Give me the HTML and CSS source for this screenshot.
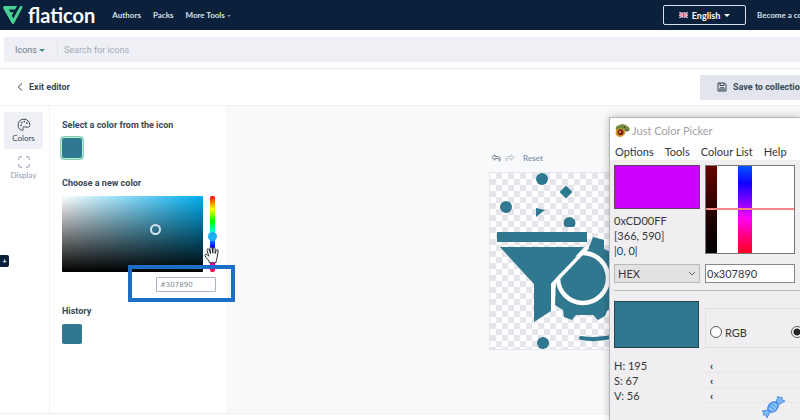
FILE: index.html
```
<!DOCTYPE html>
<html lang="en">

<head>
    <meta charset="utf-8">
    <meta name="viewport" content="width=device-width, initial-scale=1.0">
    <title>Flaticon editor</title>
    <link rel="stylesheet" href="styles.css">
</head>

<body>
    <header class="topbar">
        <a href="#" class="logo">
            <svg class="logo-mark" viewBox="0 0 20 19" aria-hidden="true">
                <path d="M1.500 0H14L12 3.500H5.800L7.300 6.300H10.500L8.800 9.500L10.300 12.500L16.500 1.200Q17.200 0 18.300 0Q20 .3 19.200 2L11.300 17Q10 19 8.700 17L.3 2.400Q-.4.6 1.500 0Z" fill="#4ad295" />
            </svg>
            <span class="logo-text">flaticon</span>
        </a>
        <nav class="nav">
            <a href="#">Authors</a>
            <a href="#">Packs</a>
            <a href="#">More Tools <span class="caret caret-small"></span></a>
        </nav>
        <button type="button" class="language">
            <svg class="flag" viewBox="0 0 10 7" aria-hidden="true">
                <path d="M0 0H10V7H0Z" fill="#39477f" />
                <path d="M0 0L10 7M10 0L0 7" stroke="#e6dce6" stroke-width="1.200" />
                <path d="M5 0V7M0 3.500H10" stroke="#fff" stroke-width="2.400" />
                <path d="M5 0V7M0 3.500H10" stroke="#dc4262" stroke-width="1.400" />
            </svg>
            English
            <span class="caret"></span>
        </button>
        <a href="#" class="contributor">Become a contributor</a>
    </header>

    <div class="search">
        <div class="search-box">
            <button type="button" class="search-type">Icons <span class="caret caret-green"></span></button>
            <input type="search" class="search-input" placeholder="Search for icons" aria-label="Search for icons">
        </div>
    </div>

    <div class="toolbar">
        <a href="#" class="exit">
            <svg class="exit-icon" viewBox="0 0 6 8" aria-hidden="true">
                <path d="M5 .5L1.200 4L5 7.500" />
            </svg>
            Exit editor
        </a>
        <button type="button" class="save">
            <svg class="save-icon" viewBox="0 0 10 10" aria-hidden="true">
                <path d="M1 1H7.500L9 2.500V9H1ZM3 1V3.500H7V1M3 9V5.800H7V9M4 7.300H6" />
            </svg>
            Save to collection
        </button>
    </div>

    <main class="editor">
        <div class="tabs">
            <button type="button" class="tab active">
                <svg class="tab-icon" viewBox="0 0 14 14" aria-hidden="true">
                    <path d="M7 1.200A5.800 5.800 0 0 0 4.600 12.300C6 12.900 6.400 12 6 11C5.400 9.500 6.200 8.600 7.600 8.800L10.500 9.300C12.300 9.400 12.900 8.100 12.800 6.600A5.700 5.700 0 0 0 7 1.200Z" />
                    <circle cx="4" cy="7.300" r=".5" />
                    <circle cx="4.800" cy="4.700" r=".5" />
                    <circle cx="7.300" cy="3.600" r=".5" />
                    <circle cx="9.900" cy="5" r=".5" />
                </svg>
                Colors
            </button>
            <button type="button" class="tab">
                <svg class="tab-icon" viewBox="0 0 14 14" aria-hidden="true">
                    <path d="M1.800 5V2.800Q1.800 1.800 2.800 1.800H5M9 1.800H11.200Q12.200 1.800 12.200 2.800V5M12.200 9V11.200Q12.200 12.200 11.200 12.200H9M5 12.200H2.800Q1.800 12.200 1.800 11.200V9" />
                </svg>
                Display
            </button>
            <button type="button" class="expand" aria-label="Expand">+</button>
        </div>

        <section class="panel">
            <h2 class="panel-title">Select a color from the icon</h2>
            <button type="button" class="swatch selected" aria-label="Icon color"></button>

            <h2 class="panel-title">Choose a new color</h2>
            <div class="mixer">
                <div class="shade">
                    <span class="shade-handle"></span>
                </div>
                <input type="range" class="hue" min="0" max="360" value="191" aria-label="Hue">
                <svg class="hand" viewBox="0 0 17 18" aria-hidden="true">
                    <path d="M5.500 16.800C5 14 2.500 12.500 1 9.800C.4 8.400 2 7.600 3.200 8.700L4.800 10.300L3 4.300C2.700 2.800 4.500 2.200 5.100 3.700L6.500 7.500L5.800 2.200C5.800.8 7.700.7 8 2.100L8.800 7.200L9.100 2.300C9.300 1 11 1.200 11.100 2.500L11.200 7.500L12.400 4.200C12.900 3.100 14.400 3.500 14.200 4.800L13.300 10C13.200 12.500 12.200 13.500 12 16.800Z" />
                </svg>
            </div>
            <div class="hex-row">
                <div class="highlight">
                    <input type="text" class="hex" value="#307890" aria-label="Hex color">
                </div>
            </div>

            <h2 class="panel-title">History</h2>
            <button type="button" class="swatch" aria-label="Previous color"></button>
        </section>

        <section class="canvas">
            <div class="history">
                <button type="button" class="history-btn" aria-label="Undo">
                    <svg viewBox="0 0 10 8" aria-hidden="true">
                        <path d="M4 .8L.8 3.500L4 6.200V4.500H7Q8.300 4.700 8.500 7.200Q10.500 3 7 2.500H4Z" />
                    </svg>
                </button>
                <button type="button" class="history-btn muted" aria-label="Redo">
                    <svg viewBox="0 0 10 8" aria-hidden="true">
                        <path d="M6 .8L9.200 3.500L6 6.200V4.500H3Q1.700 4.700 1.500 7.200Q-.5 3 3 2.500H6Z" />
                    </svg>
                </button>
                <button type="button" class="reset">Reset</button>
            </div>
            <div class="artboard">
                <svg class="artwork" viewBox="1 1 176 176" aria-hidden="true">
                    <g fill="#307890">
                        <circle cx="53" cy="7" r="6" />
                        <circle cx="17" cy="35" r="6" />
                        <path d="M77 13.500L83.500 20L77 26.500L70.500 20Z" />
                        <path d="M47 36L56 38L47 45Z" />
                        <path d="M76 55A6 6 0 1 1 85 55Z" />
                        <path d="M8 60H98V70H8Z" />
                        <circle cx="54" cy="171" r="6" />
                        <path d="M97 80L101 73L104 65L115 68V77Q121 79 124 82L134 80L140 90L135 98V116L141 125L134 135L124 134L118 139L116 144L109 148L104 143H87L83 148L75 145L74 138L66 133L67 110Z" />
                    </g>
                    <circle cx="94" cy="106" r="25" fill="#307890" stroke="#fff" stroke-width="4.500" />
                    <path d="M11 75H95L62 112V139L45 150V112Z" fill="#307890" />
                    <path d="M99 75L64 112V137" fill="none" stroke="#fff" stroke-width="3.500" />
                    <path d="M92 166Q108 169 126 164" fill="none" stroke="#307890" stroke-width="4" stroke-linecap="round" />
                </svg>
            </div>
        </section>
    </main>

    <section class="picker">
        <div class="picker-title">
            <svg class="chameleon" viewBox="0 0 15 14" aria-hidden="true">
                <path d="M1 6Q0 2 4 1.500Q8-1 12 2Q15 3.500 14.500 6L11 6.800Q10 12.500 5 13Q1 13 .5 9Z" fill="#d39a35" />
                <path d="M1 6Q0 2 4 1.500Q8-1 12 2Q15 3.500 14.500 6L10 6.200Q6 2.500 1 6Z" fill="#718b45" />
                <path d="M10 6L14.500 6.200L12 7.500Z" fill="#29302a" />
                <circle cx="5.500" cy="8.300" r="3" fill="#7b1f16" />
                <circle cx="5" cy="8" r="1" fill="#e8b45a" />
                <circle cx="9.500" cy="3.300" r=".7" fill="#26351f" />
            </svg>
            Just Color Picker
        </div>
        <div class="picker-menu">
            <button type="button">Options</button>
            <button type="button">Tools</button>
            <button type="button">Colour List</button>
            <button type="button">Help</button>
        </div>
        <div class="picker-body">
            <div class="sample">
                <div class="sample-color"></div>
                <p>0xCD00FF</p>
                <p>[366, 590]</p>
                <p>|0, 0|</p>
            </div>
            <div class="spectrum">
                <div class="spectrum-dark"></div>
                <div class="spectrum-hue"></div>
                <div class="spectrum-line"></div>
            </div>
            <div class="format">
                <select class="format-select" aria-label="Color format">
                    <option>HEX</option>
                </select>
                <svg class="format-arrow" viewBox="0 0 8 5" aria-hidden="true">
                    <path d="M1 1L4 4L7 1" />
                </svg>
            </div>
            <input type="text" class="format-value" value="0x307890" aria-label="Color value">
        </div>
        <div class="picker-body picker-edit">
            <div class="current-color"></div>
            <div class="modes">
                <label class="mode"><input type="radio" name="mode">RGB</label>
                <input type="radio" name="mode" aria-label="HSV" checked>
            </div>
            <div class="levels">
                <p>H: 195</p>
                <p>S: 67</p>
                <p>V: 56</p>
            </div>
            <div class="sliders">
                <button type="button" aria-label="Less hue">‹</button>
                <button type="button" aria-label="Less saturation">‹</button>
                <button type="button" aria-label="Less value">‹</button>
            </div>
        </div>
        <svg class="candy" viewBox="0 0 24 24" aria-hidden="true">
            <path d="M8 15L1 16L3 18L2 20L5 20L6 23L9 17ZM15 8L17 1L19 3L21 2L21 5L24 6L17 10Z" fill="#7db8f3" stroke="#4d95e3" />
            <ellipse cx="12" cy="12" rx="6" ry="4.500" transform="rotate(-45 12 12)" fill="#62a7ef" stroke="#3d86dc" />
            <path d="M8 13L13 16M10 10L15 14M12 8L16 11" stroke="#c1defc" fill="none" />
        </svg>
    </section>
</body>

</html>
```
FILE: styles.css
```
* {
    margin: 0;
    padding: 0;
    box-sizing: border-box;
}

body {
    font-family: Lato, 'Open Sans', sans-serif;
    font-size: 9px;
    background: #ffffff;
    color: #374957;
    min-height: 100vh;
    display: flex;
    flex-direction: column;
    position: relative;
    overflow: hidden;
    white-space: nowrap;
}

button,
input,
select {
    font: inherit;
    color: inherit;
    border: none;
    background: none;
    outline: none;
}

button {
    cursor: pointer;
}

a {
    color: inherit;
    text-decoration: none;
}

.topbar {
    display: flex;
    align-items: center;
    height: 30px;
    flex-shrink: 0;
    padding-left: 3px;
    background: #0a203b;
    color: #d7e0ea;
    font-size: 8px;
    font-weight: 700;
}

.logo {
    display: flex;
    align-items: center;
    gap: 5px;
    color: #ffffff;
}

.logo-mark {
    width: 20px;
    height: 19px;
}

.logo-text {
    font-size: 20px;
    line-height: 24px;
}

.nav {
    display: flex;
    gap: 12px;
    margin-left: 17px;
}

.caret {
    display: inline-block;
    border: 3px solid transparent;
    border-top-color: currentColor;
    border-bottom: none;
    vertical-align: middle;
}

.caret-small {
    border-width: 2px;
    border-bottom: none;
    opacity: 0.6;
}

.caret-green {
    color: #468b82;
}

.language {
    display: flex;
    align-items: center;
    justify-content: center;
    gap: 4px;
    width: 83px;
    height: 20px;
    margin-left: auto;
    border: 1px solid #d7e0ea;
    border-radius: 2px;
    color: #ffffff;
    font-size: 9px;
}

.flag {
    width: 9px;
    height: 6px;
}

.contributor {
    width: 54px;
    padding-left: 11px;
}

.search {
    padding: 7px 0 6px 4px;
    border-bottom: 1px solid #e7e8ed;
}

.search-box {
    display: flex;
    align-items: center;
    height: 25px;
    background: #eff0f5;
    color: #6e7a88;
    font-family: Roboto, sans-serif;
}

.search-type {
    width: 54px;
    height: 15px;
    padding-left: 11px;
    border-right: 1px solid #dfe2e8;
    text-align: left;
}

.search-input {
    flex: 1;
    padding-left: 6px;
}

.search-input::placeholder {
    color: #a2aab5;
}

.toolbar {
    display: flex;
    align-items: center;
    justify-content: space-between;
    height: 37px;
    flex-shrink: 0;
    padding-left: 17px;
    border-bottom: 1px solid #f0f1f4;
    font-family: Roboto, sans-serif;
    font-weight: 700;
}

.exit {
    display: flex;
    align-items: center;
    gap: 6px;
}

.exit-icon {
    width: 6px;
    height: 8px;
}

.exit-icon path,
.save-icon path,
.tab-icon path,
.tab-icon circle {
    fill: none;
    stroke: currentColor;
}

.save {
    display: flex;
    align-items: center;
    gap: 6px;
    width: 100px;
    height: 25px;
    padding-left: 17px;
    background: #e2e5ed;
}

.save-icon {
    flex-shrink: 0;
    width: 10px;
    height: 10px;
}

.editor {
    display: flex;
    flex: 1;
    margin-bottom: 6px;
    border-bottom: 1px solid #eceef2;
}

.tabs {
    position: relative;
    display: flex;
    flex-direction: column;
    width: 50px;
    padding: 6px 6px 0 4px;
    border-right: 1px solid #f0f1f4;
}

.tab {
    display: flex;
    flex-direction: column;
    align-items: center;
    justify-content: center;
    gap: 1px;
    height: 37px;
    border-radius: 2px;
    color: #8e9bb2;
    font-size: 8px;
}

.tab.active {
    background: #eff0f6;
    color: #374957;
}

.tab-icon {
    width: 14px;
    height: 14px;
}

.expand {
    position: absolute;
    left: 0;
    top: 149px;
    width: 9px;
    height: 12px;
    border-radius: 0 2px 2px 0;
    background: #0a203b;
    color: #ffffff;
    font-size: 8px;
    font-weight: 700;
    line-height: 10px;
}

.panel {
    width: 176px;
    padding: 13px 10px 0 12px;
}

.panel-title {
    font-family: Roboto, sans-serif;
    font-size: 9px;
    font-weight: 700;
    line-height: 12px;
    margin-bottom: 7px;
}

.swatch {
    display: block;
    width: 20px;
    height: 20px;
    margin-bottom: 19px;
    border-radius: 2px;
    background: #307890;
}

.swatch.selected {
    box-shadow: 0 0 0 1px #b4ecd4, 0 0 0 2px #8acdb5;
}

.mixer {
    position: relative;
    display: flex;
    gap: 3px;
}

.shade {
    position: relative;
    flex-shrink: 0;
    width: 141px;
    height: 76px;
    border-radius: 1px;
    background: linear-gradient(to top, #000000, transparent), linear-gradient(to right, #ffffff, #00aeef);
}

.shade-handle {
    position: absolute;
    left: 88px;
    top: 28px;
    width: 11px;
    height: 11px;
    border: 2px solid #d2e3ed;
    border-radius: 50%;
}

.hue {
    appearance: none;
    writing-mode: vertical-lr;
    width: 12px;
    height: 76px;
    margin: 0;
}

.hue::-webkit-slider-runnable-track {
    width: 5px;
    border-radius: 2px;
    background: linear-gradient(#ff0000, #ffff00 17%, #00ff00 33%, #00ffff 50%, #0000ff 67%, #ff00ff 83%, #ff0044);
}

.hue::-webkit-slider-thumb {
    appearance: none;
    width: 9px;
    height: 9px;
    margin-left: -2px;
    border-radius: 50%;
    background: #16b1f3;
}

.hand {
    position: absolute;
    left: 142px;
    top: 50px;
    width: 17px;
    height: 18px;
    z-index: 1;
}

.hand path {
    fill: #ffffff;
    stroke: #242a31;
}

.hex-row {
    position: relative;
    height: 33px;
}

.highlight {
    position: absolute;
    right: -19px;
    top: -7px;
    width: 107px;
    height: 37px;
    padding: 8px 16px 0 24px;
    border: 4px solid #1b70c6;
}

.hex {
    display: block;
    width: 60px;
    height: 15px;
    padding-left: 3px;
    border: 1px solid #a9b4c5;
    border-radius: 1px;
    color: #858c96;
    font-family: 'DejaVu Sans', sans-serif;
    font-size: 7px;
}

.canvas {
    flex: 1;
    min-width: 0;
    padding: 46px 0 0 263px;
    background: #f8f9fb;
}

.history {
    display: flex;
    align-items: center;
    gap: 4px;
    height: 12px;
    margin-bottom: 8px;
    padding-left: 2px;
    color: #8e9bb2;
    font-size: 8px;
    font-weight: 700;
}

.history-btn {
    width: 10px;
    height: 8px;
}

.history-btn svg {
    display: block;
    fill: none;
    stroke: #748191;
}

.history-btn.muted svg {
    stroke: #bcc4ce;
}

.reset {
    margin-left: 4px;
}

.artboard {
    width: 178px;
    height: 178px;
    border: 1px solid #e4e7ec;
    background: repeating-conic-gradient(#e5e6ec 0 25%, #ffffff 0 50%) 0 0 / 12px 12px;
}

.artwork {
    display: block;
}

.picker {
    position: absolute;
    left: 609px;
    right: 0;
    top: 117px;
    bottom: 0;
    overflow: hidden;
    border: 1px solid #b5b7ba;
    border-width: 1px 0 0 1px;
    background: #f0eef0;
    box-shadow: 0 0 8px rgba(0, 0, 0, 0.25);
    color: #35363a;
    font-family: Lato, 'Noto Sans', sans-serif;
    font-size: 11px;
}

.picker-title {
    display: flex;
    align-items: center;
    gap: 2px;
    height: 25px;
    padding-left: 5px;
    background: #ffffff;
    color: #a3a3a5;
}

.chameleon {
    width: 15px;
    height: 14px;
}

.picker-menu {
    display: flex;
    gap: 11px;
    height: 17px;
    padding-left: 5px;
    background: #ffffff;
    line-height: 16px;
}

.picker-body {
    display: grid;
    grid-template-columns: 86px 90px;
    gap: 6px 5px;
    padding: 5px 4px 7px;
}

.sample p {
    line-height: 15px;
}

.sample-color {
    height: 44px;
    margin-bottom: 4px;
    border: 1px solid #65446b;
    background: #cd00ff;
}

.spectrum {
    position: relative;
    display: flex;
    gap: 21px;
    height: 89px;
    border: 1px solid #77777a;
    background: #ffffff;
}

.spectrum-dark {
    width: 11px;
    background: linear-gradient(#690000, #250000 55%, #000000);
}

.spectrum-hue {
    width: 14px;
    background: linear-gradient(#0055ff, #1200ff 20%, #9900ff 45%, #ff00ff 60%, #ff0080 80%, #ff0022);
}

.spectrum-line {
    position: absolute;
    left: 0;
    right: 0;
    top: 42px;
    height: 2px;
    background: #fa8589;
}

.format {
    position: relative;
}

.format-select {
    display: block;
    appearance: none;
    width: 100%;
    height: 19px;
    padding-left: 3px;
    border: 1px solid #b9b9bb;
    background: #e3e2e3;
}

.format-arrow {
    position: absolute;
    right: 4px;
    top: 7px;
    width: 8px;
    height: 5px;
    fill: none;
    stroke: #6b6b6e;
    pointer-events: none;
}

.format-value {
    width: 100%;
    height: 19px;
    padding-left: 1px;
    border: 1px solid #88888b;
    background: #ffffff;
}

.picker-edit {
    grid-template-columns: 85px 1fr;
    gap: 10px 6px;
    margin-left: 4px;
    padding: 10px 0 0;
    border-top: 1px solid #b9b8ba;
}

.current-color {
    height: 47px;
    border: 1px solid #29434e;
    background: #307890;
}

.modes {
    display: flex;
    align-items: center;
    justify-content: space-between;
    height: 40px;
    margin-top: 7px;
    padding: 8px 0 0 4px;
    border: 1px solid #e2e0e2;
    border-right: none;
}

.modes input {
    appearance: none;
    flex-shrink: 0;
    width: 12px;
    height: 12px;
    border: 1px solid #58585b;
    border-radius: 50%;
    background: #ffffff;
}

.modes input:checked {
    margin-right: -3px;
    background: radial-gradient(#242427 0 3px, #ffffff 4px);
}

.mode {
    display: flex;
    align-items: center;
    gap: 3px;
}

.levels p {
    line-height: 15px;
}

.sliders {
    display: flex;
    flex-direction: column;
}

.sliders button {
    height: 15px;
    padding-left: 5px;
    border-bottom: 1px solid #e8e6e8;
    font-weight: 700;
    line-height: 11px;
    text-align: left;
}

.candy {
    position: absolute;
    right: 15px;
    bottom: 1px;
    width: 24px;
    height: 24px;
}
```
